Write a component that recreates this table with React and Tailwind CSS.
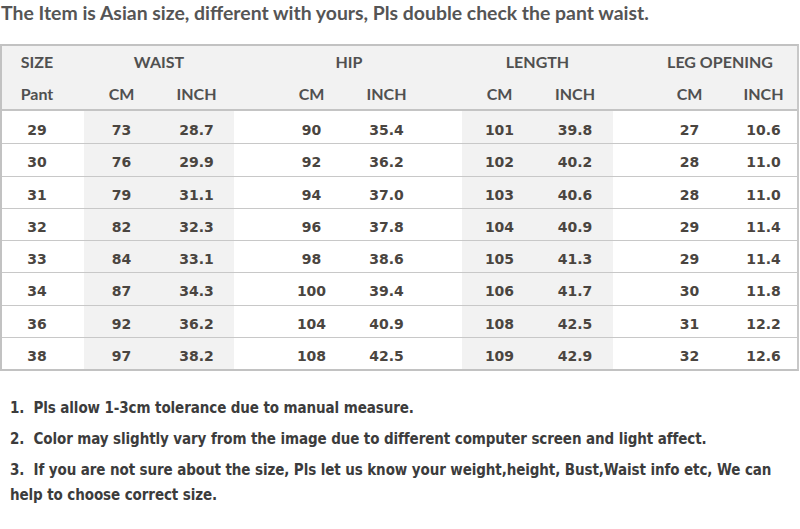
const rows = [
  ["29", "73", "28.7", "90", "35.4", "101", "39.8", "27", "10.6"],
  ["30", "76", "29.9", "92", "36.2", "102", "40.2", "28", "11.0"],
  ["31", "79", "31.1", "94", "37.0", "103", "40.6", "28", "11.0"],
  ["32", "82", "32.3", "96", "37.8", "104", "40.9", "29", "11.4"],
  ["33", "84", "33.1", "98", "38.6", "105", "41.3", "29", "11.4"],
  ["34", "87", "34.3", "100", "39.4", "106", "41.7", "30", "11.8"],
  ["36", "92", "36.2", "104", "40.9", "108", "42.5", "31", "12.2"],
  ["38", "97", "38.2", "108", "42.5", "109", "42.9", "32", "12.6"],
];

// size | gap | waist cm/inch | gap | hip cm/inch | gap | length cm/inch | gap | leg cm/inch
const grid =
  "grid grid-cols-[70px_12px_75px_75px_40px_75px_75px_38px_75px_76px_39px_75px_73px]";

const head = "font-['Lato','Open_Sans',sans-serif] font-bold text-[16px] text-[#505050]";
const cell = "flex items-center justify-center pt-[6px]";

export default function App() {
  return (
    <div className="w-[800px] h-[529px] bg-white overflow-hidden">
      {/* Title */}
      <div className="h-[26px] leading-[26px] pl-[1px] font-['Lato','Open_Sans',sans-serif] font-bold text-[19.4px] text-[#555]">
        The Item is Asian size, different with yours, Pls double check the pant waist.
      </div>

      {/* Size table */}
      <div className="mt-[18px] w-[799px] border-2 border-[#c2c2c2] border-r-[#c8c8c8]">
        <div className={`bg-[#f2f2f2] border-b-2 border-[#c4c4c4] ${head}`}>
          <div className={`${grid} h-[32px] items-center`}>
            <div className="text-center">SIZE</div>
            <div />
            <div className="col-span-2 text-center">WAIST</div>
            <div />
            <div className="col-span-2 text-center">HIP</div>
            <div />
            <div className="col-span-2 text-center">LENGTH</div>
            <div />
            <div className="col-span-2 text-center pr-[12px]">LEG OPENING</div>
          </div>
          <div className={`${grid} h-[31px] items-center`}>
            <div className="text-center">Pant</div>
            <div />
            <div className="text-center">CM</div>
            <div className="text-center">INCH</div>
            <div />
            <div className="text-center">CM</div>
            <div className="text-center">INCH</div>
            <div />
            <div className="text-center">CM</div>
            <div className="text-center">INCH</div>
            <div />
            <div className="text-center">CM</div>
            <div className="text-center">INCH</div>
          </div>
        </div>

        {rows.map((r, i) => (
          <div
            key={r[0]}
            className={`${grid} h-[32.25px] font-['DejaVu_Sans',sans-serif] font-bold text-[14px] text-[#4a4540] ${
              i > 0 ? "border-t border-[#c8c8c8]" : ""
            }`}
          >
            <div className={cell}>{r[0]}</div>
            <div />
            <div className={`${cell} bg-[#f2f2f2]`}>{r[1]}</div>
            <div className={`${cell} bg-[#f2f2f2]`}>{r[2]}</div>
            <div />
            <div className={cell}>{r[3]}</div>
            <div className={cell}>{r[4]}</div>
            <div />
            <div className={`${cell} bg-[#f2f2f2]`}>{r[5]}</div>
            <div className={`${cell} bg-[#f2f2f2]`}>{r[6]}</div>
            <div />
            <div className={cell}>{r[7]}</div>
            <div className={cell}>{r[8]}</div>
          </div>
        ))}
      </div>

      {/* Notes */}
      <div className="mt-[25px] pl-[10px] font-['DejaVu_Sans_Condensed','Liberation_Sans_Narrow',sans-serif] font-bold text-[15px] leading-[25px] text-[#3c3c3c] tracking-[-0.1px] space-y-[6px]">
        <p>1.&nbsp; Pls allow 1-3cm tolerance due to manual measure.</p>
        <p>2.&nbsp; Color may slightly vary from the image due to different computer screen and light affect.</p>
        <p>
          3.&nbsp; If you are not sure about the size, Pls let us know your weight,height, Bust,Waist info etc, We can
          <br />
          help to choose correct size.
        </p>
      </div>
    </div>
  );
}
